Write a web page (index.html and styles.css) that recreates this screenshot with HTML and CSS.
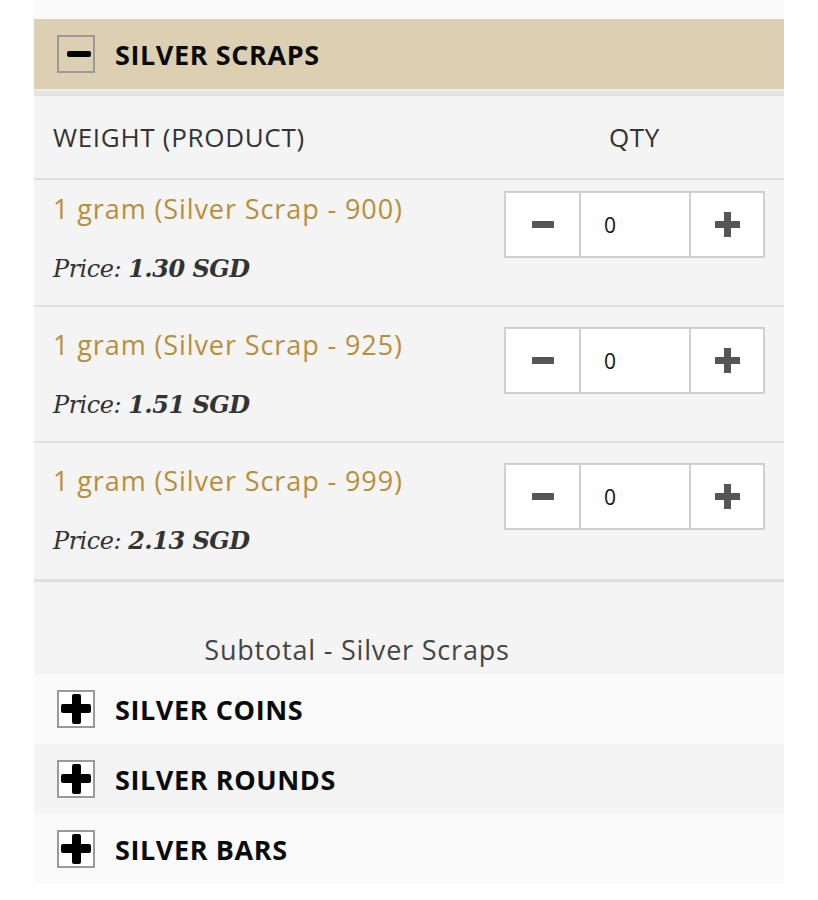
FILE: index.html
```html
<!DOCTYPE html>
<html>
<head>
<meta charset="utf-8">
<link rel="stylesheet" href="styles.css">
</head>
<body>
<div class="wrap">
  <div class="acc-head open">
    <span class="toggle minus"><span class="bar-h"></span></span>
    <span class="acc-title">SILVER SCRAPS</span>
  </div>
  <div class="acc-sep"></div>
  <div class="table">
    <div class="thead">
      <div class="th-name">WEIGHT (PRODUCT)</div>
      <div class="th-qty">QTY</div>
    </div>
    <div class="row first">
      <div class="prod">
        <div class="prod-name">1 gram (Silver Scrap - 900)</div>
        <div class="price">Price: <b>1.30 SGD</b></div>
      </div>
      <div class="qty">
        <button class="qbtn"><span class="q-minus"></span></button>
        <input class="qin" type="text" value="0">
        <button class="qbtn"><span class="q-plus"></span></button>
      </div>
    </div>
    <div class="row">
      <div class="prod">
        <div class="prod-name">1 gram (Silver Scrap - 925)</div>
        <div class="price">Price: <b>1.51 SGD</b></div>
      </div>
      <div class="qty">
        <button class="qbtn"><span class="q-minus"></span></button>
        <input class="qin" type="text" value="0">
        <button class="qbtn"><span class="q-plus"></span></button>
      </div>
    </div>
    <div class="row last">
      <div class="prod">
        <div class="prod-name">1 gram (Silver Scrap - 999)</div>
        <div class="price">Price: <b>2.13 SGD</b></div>
      </div>
      <div class="qty">
        <button class="qbtn"><span class="q-minus"></span></button>
        <input class="qin" type="text" value="0">
        <button class="qbtn"><span class="q-plus"></span></button>
      </div>
    </div>
    <div class="subtotal">
      <div class="sub-label">Subtotal - Silver Scraps</div>
    </div>
  </div>
  <div class="acc-head closed light">
    <span class="toggle plus"><span class="bar-h"></span><span class="bar-v"></span></span>
    <span class="acc-title">SILVER COINS</span>
  </div>
  <div class="acc-head closed grey">
    <span class="toggle plus"><span class="bar-h"></span><span class="bar-v"></span></span>
    <span class="acc-title">SILVER ROUNDS</span>
  </div>
  <div class="acc-head closed light">
    <span class="toggle plus"><span class="bar-h"></span><span class="bar-v"></span></span>
    <span class="acc-title">SILVER BARS</span>
  </div>
</div>
</body>
</html>
```
FILE: styles.css
```css
* { box-sizing: border-box; }
html, body { margin: 0; padding: 0; background: #ffffff; }
body { font-family: "Open Sans", "Noto Sans", sans-serif; }

.wrap {
  margin-left: 34px;
  width: 750px;
  padding-top: 19px;
  background: #fafafa;
}

.acc-head {
  height: 70px;
  display: flex;
  align-items: center;
  padding-left: 23px;
}
.acc-head.open { background: #ddd0b2; }
.acc-head.light { background: #fafafa; }
.acc-head.grey { background: #f4f4f4; }

.toggle {
  position: relative;
  width: 38px;
  height: 38px;
  border: 2px solid #9a9a9a;
  margin-right: 20px;
  flex: none;
}
.toggle.plus { background: #ffffff; }
.toggle .bar-h, .toggle .bar-v {
  position: absolute;
  background: #000;
  border-radius: 2px;
}
.toggle.minus .bar-h { left: 8px; top: 14px; width: 24px; height: 6px; }
.toggle.plus .bar-h { left: 2px; top: 12px; width: 30px; height: 9px; }
.toggle.plus .bar-v { left: 13px; top: 2px; width: 9px; height: 30px; }

.acc-title {
  font-family: "Open Sans", sans-serif;
  font-weight: 700;
  font-size: 27px;
  letter-spacing: 0.6px;
  color: #0a0a0a;
}

.acc-sep {
  height: 7px;
  background: #e3e3e3;
  border-top: 2px solid #ececec;
}

.table { background: #f4f4f4; }

.thead {
  display: grid;
  grid-template-columns: 1fr 261px;
  height: 84px;
  padding: 0 19px;
  align-items: center;
  border-bottom: 2px solid #dedede;
  font-size: 26px;
  letter-spacing: 0.7px;
  color: #333;
}
.th-qty { text-align: center; }

.row {
  display: grid;
  grid-template-columns: 1fr 261px;
  height: 136px;
  padding: 20px 19px 0;
  border-bottom: 2px solid #dedede;
}
.row.first { height: 127px; padding-top: 11px; }
.row.last { height: 139px; border-bottom: 3px solid #dedede; }

.prod-name {
  font-size: 27px;
  line-height: 36px;
  letter-spacing: 0.9px;
  color: #b68f3d;
}
.price {
  margin-top: 27px;
  font-family: "DejaVu Serif", serif;
  font-style: italic;
  font-size: 24px;
  line-height: 30px;
  letter-spacing: -0.5px;
  color: #333;
}
.price b { font-weight: 700; }

.qty {
  display: flex;
  height: 67px;
  border: 2px solid #cfcfcf;
  background: #fff;
}
.qbtn {
  width: 73px;
  border: 0;
  background: #fff;
  padding: 0;
  display: flex;
  align-items: center;
  justify-content: center;
  flex: none;
}
.qbtn:last-child { flex: 1; width: auto; }
.qin {
  width: 112px;
  border: 0;
  border-left: 2px solid #cfcfcf;
  border-right: 2px solid #cfcfcf;
  padding: 0 0 0 23px;
  font-family: "Open Sans", sans-serif;
  font-size: 21px;
  color: #111;
  background: #fff;
  flex: none;
}
.q-minus {
  width: 22px; height: 7px; background: #555; border-radius: 1px;
}
.q-plus {
  position: relative; width: 25px; height: 25px;
}
.q-plus::before, .q-plus::after {
  content: ""; position: absolute; background: #555;
}
.q-plus::before { left: 0; top: 9px; width: 25px; height: 7px; }
.q-plus::after { left: 9px; top: 0; width: 7px; height: 25px; }

.subtotal {
  height: 92px;
  display: grid;
  grid-template-columns: 646px 1fr;
  align-items: end;
}
.sub-label {
  text-align: center;
  font-size: 27px;
  line-height: 37px;
  letter-spacing: 0.8px;
  color: #444;
  padding-bottom: 6px;
}
```
